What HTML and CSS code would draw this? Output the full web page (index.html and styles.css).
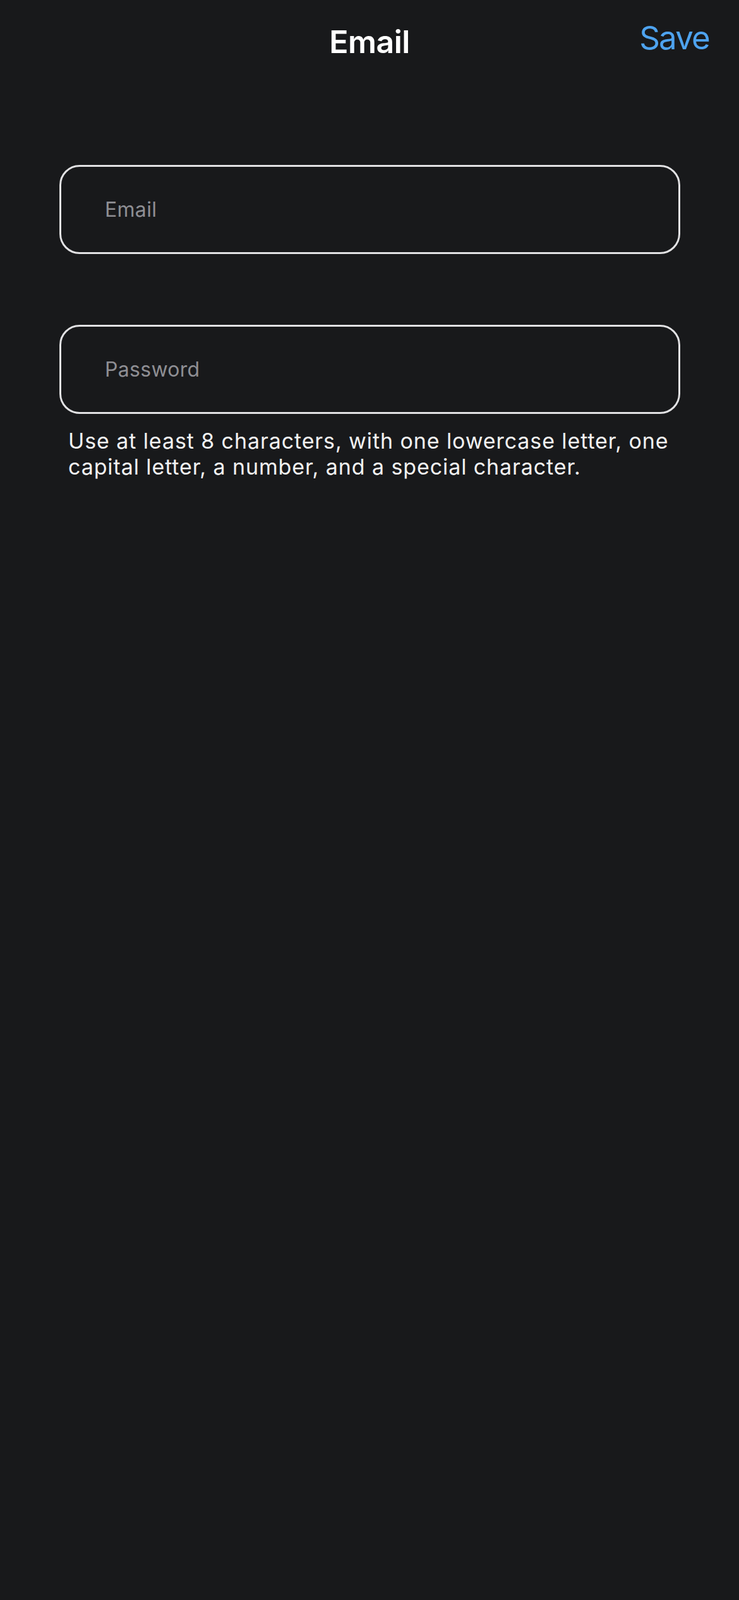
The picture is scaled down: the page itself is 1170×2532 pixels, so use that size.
FILE: index.html
```html
<!DOCTYPE html>
<html lang="en">
<head>
<meta charset="utf-8">
<title>Email</title>
<link rel="stylesheet" href="styles.css">
</head>
<body>
<div class="screen">
  <header class="nav">
    <span class="nav-side"></span>
    <h1 class="nav-title">Email</h1>
    <button class="nav-action" type="button">Save</button>
  </header>
  <main class="form">
    <input class="field" type="email" placeholder="Email">
    <div class="group">
      <input class="field" type="password" placeholder="Password">
      <p class="hint">Use at least 8 characters, with one lowercase letter, one capital letter, a number, and a special character.</p>
    </div>
  </main>
</div>
</body>
</html>
```
FILE: styles.css
```css
html, body {
  margin: 0;
  padding: 0;
  background: #18191b;
}
body {
  font-family: Inter, "Noto Sans", "Liberation Sans", sans-serif;
  color: #ffffff;
}
.screen {
  min-height: 2532px;
  background: #18191b;
}
.nav {
  display: grid;
  grid-template-columns: 1fr auto 1fr;
  align-items: start;
  height: 130px;
}
.nav-title {
  margin: 0;
  padding-top: 36px;
  font-size: 50px;
  line-height: 60px;
  font-weight: 600;
  letter-spacing: -0.5px;
}
.nav-action {
  justify-self: end;
  margin: 0;
  padding: 30px 47px 0 0;
  border: 0;
  background: none;
  font-family: inherit;
  font-size: 51px;
  line-height: 60px;
  font-weight: 400;
  color: #4ea3ef;
  letter-spacing: -1.8px;
}
.form {
  display: flex;
  flex-direction: column;
  gap: 112px;
  padding: 131px 93px 0 94px;
}
.field {
  display: block;
  box-sizing: border-box;
  width: 100%;
  height: 141px;
  margin: 0;
  padding: 0 69px;
  border: 3px solid #e2e2e4;
  border-radius: 32px;
  background: transparent;
  font-family: inherit;
  font-size: 32px;
  letter-spacing: 0.3px;
  color: #ffffff;
  outline: none;
}
.field::placeholder {
  color: #8e8e93;
}
.hint {
  margin: 22px 0 0;
  padding-left: 14px;
  font-size: 34px;
  line-height: 41px;
  letter-spacing: 0.9px;
  color: #f2f2f2;
}
```
